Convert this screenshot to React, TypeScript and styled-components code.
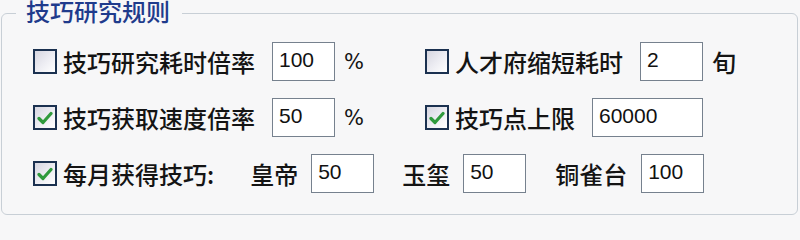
import React from "react";
import styled, { createGlobalStyle } from "styled-components";

const GlobalStyle = createGlobalStyle`
    html, body {
        margin: 0;
        padding: 0;
        background: #f7f7f8;
    }
    body {
        font-family: "Noto Sans CJK SC", "Noto Sans", sans-serif;
        color: #141414;
    }
`;

const GroupBox = styled.fieldset`
    box-sizing: border-box;
    width: 797px;
    margin: 0 0 0 1px;
    padding: 16px 0 21px 31px;
    border: 1px solid #c8cfd6;
    border-radius: 6px;
    min-width: 0;
`;

const Title = styled.legend`
    margin-left: -17px;
    padding: 1px 12px 5px 10px;
    font-size: 24px;
    font-weight: 500;
    line-height: 20px;
    color: #1f3b8c;
`;

const Rows = styled.div`
    display: flex;
    flex-direction: column;
    gap: 17px;
`;

const Row = styled.div`
    display: flex;
    align-items: center;
    height: 39px;
`;

const Cell = styled.div<{ $width?: number }>`
    display: flex;
    align-items: center;
    width: ${(p) => (p.$width ? `${p.$width}px` : "auto")};
    flex-shrink: 0;
`;

const Box = styled.span`
    box-sizing: border-box;
    width: 24px;
    height: 25px;
    border: 2px solid #1b3150;
    background: linear-gradient(135deg, #d6d6e0 0%, #ececf2 50%, #ffffff 100%);
    display: flex;
    align-items: center;
    justify-content: center;
    flex-shrink: 0;
`;

const Label = styled.span<{ $gap?: number }>`
    font-size: 24px;
    font-weight: 500;
    line-height: 30px;
    margin-left: ${(p) => p.$gap ?? 0}px;
    white-space: nowrap;
`;

const Field = styled.input<{ $width?: number; $gap?: number }>`
    box-sizing: border-box;
    width: ${(p) => p.$width ?? 63}px;
    height: 39px;
    margin-left: ${(p) => p.$gap ?? 0}px;
    padding: 0 0 3px 6px;
    border: 1.5px solid #76818e;
    background: #ffffff;
    font-family: "Liberation Sans", Arial, sans-serif;
    font-size: 21px;
    color: #111;
    outline: none;
`;

const Unit = styled.span<{ $small?: boolean; $gap?: number }>`
    margin-left: ${(p) => p.$gap ?? 9}px;
    font-size: ${(p) => (p.$small ? 21 : 24)}px;
    font-weight: 500;
    font-family: ${(p) =>
        p.$small ? `"DejaVu Sans", sans-serif` : `"Noto Sans CJK SC", sans-serif`};
    line-height: 30px;
`;

const Check = ({ checked, label }: { checked?: boolean; label: string }) => (
    <>
        <Box>
            {checked && (
                <svg width="16" height="14" viewBox="0 0 16 14">
                    <path d="M2 7.5 L6 11.5 L14 2.5" fill="none" stroke="#2f9a3c" strokeWidth="3.2" strokeLinecap="round" strokeLinejoin="round" />
                </svg>
            )}
        </Box>
        <Label $gap={6}>{label}</Label>
    </>
);

export default function App() {
    return (
        <>
            <GlobalStyle />
            <GroupBox>
                <Title>技巧研究规则</Title>
                <Rows>
                    <Row>
                        <Cell $width={392}>
                            <Check label="技巧研究耗时倍率" />
                            <Field $gap={17} defaultValue="100" readOnly />
                            <Unit $small>%</Unit>
                        </Cell>
                        <Cell>
                            <Check label="人才府缩短耗时" />
                            <Field $gap={17} defaultValue="2" readOnly />
                            <Unit>旬</Unit>
                        </Cell>
                    </Row>
                    <Row>
                        <Cell $width={392}>
                            <Check checked label="技巧获取速度倍率" />
                            <Field $gap={17} defaultValue="50" readOnly />
                            <Unit $small>%</Unit>
                        </Cell>
                        <Cell>
                            <Check checked label="技巧点上限" />
                            <Field $gap={17} $width={111} defaultValue="60000" readOnly />
                        </Cell>
                    </Row>
                    <Row>
                        <Check checked label="每月获得技巧:" />
                        <Label $gap={36}>皇帝</Label>
                        <Field $gap={13} defaultValue="50" readOnly />
                        <Label $gap={28}>玉玺</Label>
                        <Field $gap={13} defaultValue="50" readOnly />
                        <Label $gap={29}>铜雀台</Label>
                        <Field $gap={14} defaultValue="100" readOnly />
                    </Row>
                </Rows>
            </GroupBox>
        </>
    );
}
